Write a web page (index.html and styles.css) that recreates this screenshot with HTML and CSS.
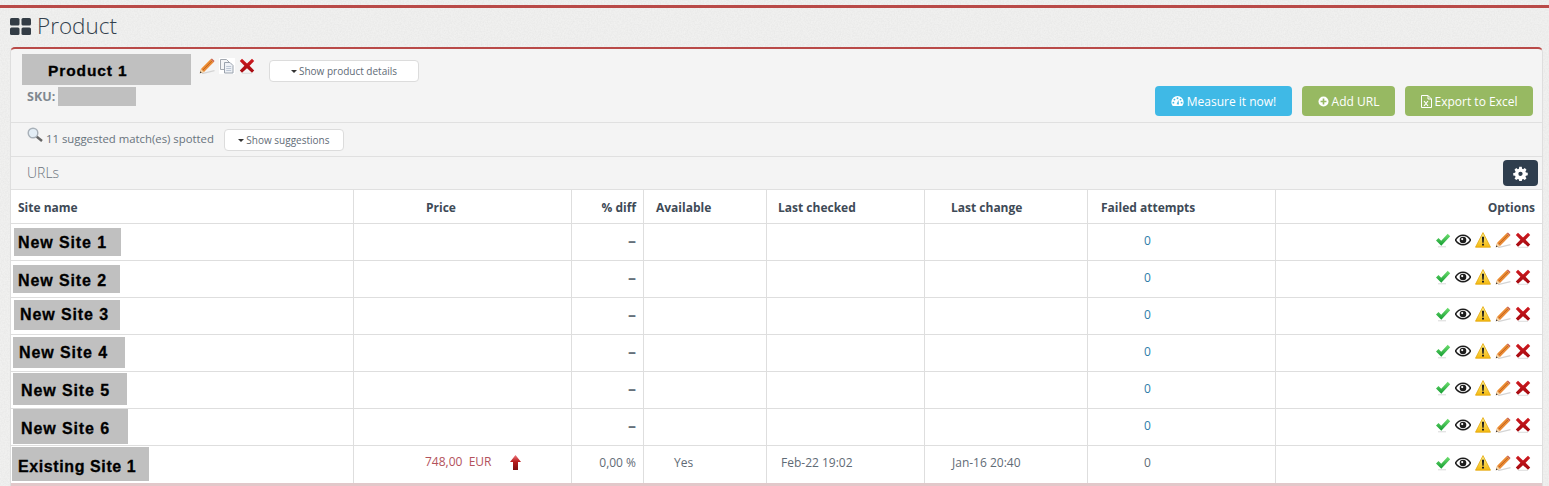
FILE: index.html
```html
<!DOCTYPE html>
<html lang="en">
<head>
<meta charset="utf-8">
<title>Product</title>
<link rel="stylesheet" href="styles.css">
</head>
<body>
<svg class="defs" width="0" height="0" aria-hidden="true">
  <defs>
    <linearGradient id="gy" x1="0" y1="0" x2="0" y2="1"><stop offset="0" stop-color="#fdf08a"/><stop offset="1" stop-color="#f4b90f"/></linearGradient>
    <linearGradient id="gg" x1="0" y1="0" x2="0" y2="1"><stop offset="0" stop-color="#6fe070"/><stop offset="1" stop-color="#129a30"/></linearGradient>
    <linearGradient id="gr" x1="0" y1="0" x2="0" y2="1"><stop offset="0" stop-color="#ee7a80"/><stop offset="0.45" stop-color="#b81a1a"/><stop offset="1" stop-color="#7c0f0f"/></linearGradient>
    <linearGradient id="gx" x1="0" y1="0" x2="0" y2="1"><stop offset="0" stop-color="#d01a20"/><stop offset="1" stop-color="#a30a10"/></linearGradient>
    <symbol id="i-check" viewBox="0 0 16 16"><path d="M3 14.800h8" stroke="#d9d9d9" stroke-width="1"/><path d="M1 8.400 3.500 5.900l2.700 2.800L12.700 1.800 15.200 4.200 6.300 13.800z" fill="url(#gg)"/></symbol>
    <symbol id="i-eye" viewBox="0 0 16 16"><path d="M.4 8C2.400 4.700 5 3.200 8 3.200S13.600 4.700 15.600 8C13.600 11.300 11 12.800 8 12.800S2.400 11.300.4 8Z" fill="#fff" stroke="#1d1d1d" stroke-width="1.500"/><circle cx="8" cy="8" r="3.300" fill="#1d1d1d"/><circle cx="7.200" cy="7.100" r="1.100" fill="#fff"/></symbol>
    <symbol id="i-warn" viewBox="0 0 16 16"><path d="M8 .6 15.500 15.200H.5Z" fill="url(#gy)" stroke="#e3a70d" stroke-width=".8" stroke-linejoin="round"/><path d="M6.900 4.800h2.200l-.4 6H7.300ZM7 11.700h2v1.900H7Z" fill="#1f1f1f"/></symbol>
    <symbol id="i-pencil" viewBox="0 0 16 16"><path d="M3 15.600 15.500 12.600" stroke="#d4d4d4" stroke-width="1.300" fill="none"/><path d="M.8 15.200 2 11 11.700 1.300 14.600 4.200 5 13.900Z" fill="#e98a35"/><path d="M3.400 12.600 12.900 3" stroke="#c4661c" stroke-width="1"/><path d="M2.600 10.400 11.400 1.600" stroke="#f7b56b" stroke-width=".8"/><path d="M11.700 1.300 12.900.4 15.500 3 14.600 4.200Z" fill="#c9604c"/><path d="M.8 15.200 2 11l3 2.900Z" fill="#f4d6aa"/><path d="M.8 15.200l.5-1.900 1.400 1.400Z" fill="#3a3a3a"/></symbol>
    <symbol id="i-x" viewBox="0 0 16 16"><path d="M3 15.300h10" stroke="#dcdcdc" stroke-width="1"/><path d="M.8 3 3 .8 8 5.400 13 .8 15.200 3 10.600 7.800l4.600 4.800L13 14.800 8 10.200 3 14.800.8 12.600 5.400 7.800Z" fill="url(#gx)"/></symbol>
  </defs>
</svg>

<header class="page-title">
  <svg class="title-icon" viewBox="0 0 21 17" aria-hidden="true">
    <rect x="0" y="0" width="9.500" height="7.500" rx="1.500"/><rect x="11.500" y="0" width="9.500" height="7.500" rx="1.500"/>
    <rect x="0" y="9.500" width="9.500" height="7.500" rx="1.500"/><rect x="11.500" y="9.500" width="9.500" height="7.500" rx="1.500"/>
  </svg>
  <h1>Product</h1>
</header>

<main class="panel">
  <section class="summary">
    <div class="summary-left">
      <div class="product-row">
        <div class="product-name">Product 1</div>
        <div class="product-icons">
          <svg class="ico"><use href="#i-pencil"/></svg>
          <svg class="ico" viewBox="0 0 16 16"><rect width="16" height="16" fill="#fff"/><path d="M1.500 1.500h6l2.500 2.500v7.500H1.500Z" fill="#f4f5f7" stroke="#a3a8b0"/><path d="M5.500 4.500h5.500l3 3v7.500H5.500Z" fill="#eef1f6" stroke="#9aa2ad"/><path d="M7.200 8.500h5M7.200 10.500h5M7.200 12.500h5" stroke="#bcc6d4"/></svg>
          <svg class="ico"><use href="#i-x"/></svg>
        </div>
        <button class="btn-light details-btn"><span class="caret"></span>Show product details</button>
      </div>
      <div class="sku"><span>SKU:</span><span class="sku-box"></span></div>
    </div>
    <div class="actions">
      <a class="btn btn-blue">
        <svg class="btn-ico" viewBox="0 0 14 12"><path d="M7 .5A6.600 6.600 0 0 0 .4 7c0 1.800.6 3.400 1.600 4.500h10c1-1.100 1.600-2.700 1.600-4.500A6.600 6.600 0 0 0 7 .5Z" fill="#fff"/><circle cx="7" cy="3" r="1" fill="#3fb9e6"/><circle cx="3.700" cy="4.500" r="1" fill="#3fb9e6"/><circle cx="10.300" cy="4.500" r="1" fill="#3fb9e6"/><circle cx="2.600" cy="7.800" r="1" fill="#3fb9e6"/><circle cx="11.400" cy="7.800" r="1" fill="#3fb9e6"/><path d="M6 9.500 8 5l.6 4.700Z" fill="#3fb9e6"/></svg>Measure it now!</a>
      <a class="btn btn-green">
        <svg class="btn-ico plus" viewBox="0 0 12 12"><circle cx="6" cy="6" r="5.500" fill="#fff"/><path d="M6 2.800v6.400M2.800 6h6.400" stroke="#97b962" stroke-width="1.800"/></svg>Add URL</a>
      <a class="btn btn-green">
        <svg class="btn-ico xls" viewBox="0 0 11 13"><path d="M.5.500h6.500l3.500 3.500v8.500H.5Z" fill="none" stroke="#fff"/><path d="M7 .5V4h3.500" fill="none" stroke="#fff"/><path d="M3 6l4 5M7 6l-4 5" stroke="#fff" stroke-width="1.200"/></svg>Export to Excel</a>
    </div>
  </section>

  <section class="suggest">
    <svg class="lens" viewBox="0 0 16 16"><path d="M9.500 9.500l5.500 4.500" stroke="#666" stroke-width="2.400"/><circle cx="6" cy="6" r="4.800" fill="#e3edf5" stroke="#a8b0b8" stroke-width="1.400"/></svg>
    <span class="suggest-text">11 suggested match(es) spotted</span>
    <button class="btn-light suggest-btn"><span class="caret"></span>Show suggestions</button>
  </section>

  <section class="urls-bar">
    <span class="urls-title">URLs</span>
    <button class="gear-btn" aria-label="Settings">
      <svg viewBox="-1 -1 18 18" width="15" height="15"><path fill="#fff" fill-rule="evenodd" d="M6.500 0h3l.4 2.200 1.300.6L13.100 1.500l2.100 2.100-1.300 1.900.6 1.300 2.200.4v3l-2.200.4-.6 1.300 1.300 1.900-2.100 2.100-1.900-1.300-1.300.6-.4 2.200h-3l-.4-2.200-1.300-.6-1.900 1.300L.8 14l1.300-1.900-.6-1.300L-.7 10.400v-3l2.200-.4.6-1.300L.8 3.600l2.100-2.100 1.900 1.300 1.300-.6ZM8 5.800a2.600 2.600 0 1 0 0 5.200 2.600 2.600 0 0 0 0-5.200Z"/></svg>
    </button>
  </section>

  <table class="urls">
    <colgroup>
      <col class="c1"><col class="c2"><col class="c3"><col class="c4"><col class="c5"><col class="c6"><col class="c7"><col class="c8">
    </colgroup>
    <thead>
      <tr>
        <th class="h-site">Site name</th><th class="h-price">Price</th><th class="h-right">% diff</th><th class="h-avail">Available</th><th class="h-checked">Last checked</th><th class="h-change">Last change</th><th class="h-fails">Failed attempts</th><th class="h-right">Options</th>
      </tr>
    </thead>
    <tbody>
      <tr>
        <td class="site"><div class="label l1">New Site 1</div></td><td></td><td class="diff">–</td><td></td><td></td><td></td><td class="fails">0</td>
        <td><div class="opts"><svg class="ico"><use href="#i-check"/></svg><svg class="ico"><use href="#i-eye"/></svg><svg class="ico"><use href="#i-warn"/></svg><svg class="ico"><use href="#i-pencil"/></svg><svg class="ico"><use href="#i-x"/></svg></div></td>
      </tr>
      <tr>
        <td class="site"><div class="label l2">New Site 2</div></td><td></td><td class="diff">–</td><td></td><td></td><td></td><td class="fails">0</td>
        <td><div class="opts"><svg class="ico"><use href="#i-check"/></svg><svg class="ico"><use href="#i-eye"/></svg><svg class="ico"><use href="#i-warn"/></svg><svg class="ico"><use href="#i-pencil"/></svg><svg class="ico"><use href="#i-x"/></svg></div></td>
      </tr>
      <tr>
        <td class="site"><div class="label l3">New Site 3</div></td><td></td><td class="diff">–</td><td></td><td></td><td></td><td class="fails">0</td>
        <td><div class="opts"><svg class="ico"><use href="#i-check"/></svg><svg class="ico"><use href="#i-eye"/></svg><svg class="ico"><use href="#i-warn"/></svg><svg class="ico"><use href="#i-pencil"/></svg><svg class="ico"><use href="#i-x"/></svg></div></td>
      </tr>
      <tr>
        <td class="site"><div class="label l4">New Site 4</div></td><td></td><td class="diff">–</td><td></td><td></td><td></td><td class="fails">0</td>
        <td><div class="opts"><svg class="ico"><use href="#i-check"/></svg><svg class="ico"><use href="#i-eye"/></svg><svg class="ico"><use href="#i-warn"/></svg><svg class="ico"><use href="#i-pencil"/></svg><svg class="ico"><use href="#i-x"/></svg></div></td>
      </tr>
      <tr>
        <td class="site"><div class="label l5">New Site 5</div></td><td></td><td class="diff">–</td><td></td><td></td><td></td><td class="fails">0</td>
        <td><div class="opts"><svg class="ico"><use href="#i-check"/></svg><svg class="ico"><use href="#i-eye"/></svg><svg class="ico"><use href="#i-warn"/></svg><svg class="ico"><use href="#i-pencil"/></svg><svg class="ico"><use href="#i-x"/></svg></div></td>
      </tr>
      <tr>
        <td class="site"><div class="label l6">New Site 6</div></td><td></td><td class="diff">–</td><td></td><td></td><td></td><td class="fails">0</td>
        <td><div class="opts"><svg class="ico"><use href="#i-check"/></svg><svg class="ico"><use href="#i-eye"/></svg><svg class="ico"><use href="#i-warn"/></svg><svg class="ico"><use href="#i-pencil"/></svg><svg class="ico"><use href="#i-x"/></svg></div></td>
      </tr>
      <tr class="last">
        <td class="site"><div class="label l7">Existing Site 1</div></td>
        <td class="price"><span class="amount">748,00&nbsp; EUR</span><svg class="arrow" viewBox="0 0 11 15"><path d="M5.500 0 11 7H8v8H3V7H0Z" fill="url(#gr)"/></svg></td>
        <td class="pct">0,00 %</td><td class="avail">Yes</td><td class="checked">Feb-22 19:02</td><td class="changed">Jan-16 20:40</td><td class="fails plain">0</td>
        <td><div class="opts"><svg class="ico"><use href="#i-check"/></svg><svg class="ico"><use href="#i-eye"/></svg><svg class="ico"><use href="#i-warn"/></svg><svg class="ico"><use href="#i-pencil"/></svg><svg class="ico"><use href="#i-x"/></svg></div></td>
      </tr>
    </tbody>
  </table>
</main>
</body>
</html>
```

FILE: styles.css
```css
* { box-sizing: border-box; }
html, body { margin: 0; height: 486px; overflow: hidden; }
body {
  background-color: #f1f1f0;
  background-image: url("data:image/svg+xml,%3Csvg xmlns='http://www.w3.org/2000/svg' width='300' height='300'%3E%3Cfilter id='n'%3E%3CfeTurbulence type='fractalNoise' baseFrequency='.7' numOctaves='2'/%3E%3CfeColorMatrix values='0 0 0 0 .5 0 0 0 0 .5 0 0 0 0 .5 0 0 0 .25 -.06'/%3E%3C/filter%3E%3Crect width='300' height='300' filter='url(%23n)'/%3E%3C/svg%3E");
  font-family: "Open Sans", "Liberation Sans", sans-serif;
  font-size: 12px;
  color: #5f6b76;
  padding: 5px 5px 0 10px;
}
body::before {
  content: "";
  display: block;
  height: 3px;
  margin: 0 -5px 0 -10px;
  background: #b94a48;
}
.defs { display: block; height: 0; }

.page-title { display: flex; align-items: center; gap: 6px; height: 39px; padding-bottom: 3px; }
.title-icon { width: 21px; height: 17px; fill: #333c45; }
.page-title h1 { margin: 0; font-size: 22.500px; font-weight: 300; color: #333f4d; line-height: 1; }

.panel { width: 1533px; border: 1px solid #dedede; border-top: 2px solid #b94a48; border-bottom: 0; border-radius: 5px 5px 0 0; background: #f4f4f4; }

.summary { height: 74px; display: flex; justify-content: space-between; border-bottom: 1px solid #e0e0e0; padding: 5px 9px 5px 11px; }
.summary-left { display: flex; flex-direction: column; }
.product-row { display: flex; align-items: flex-start; }
.product-name { width: 169px; height: 31px; background: #c0c0c0; color: #000; font: bold 15.500px/33px "Liberation Sans", sans-serif; letter-spacing: .9px; padding-left: 26px; -webkit-text-stroke: .3px #000; }
.product-icons { display: flex; gap: 4px; margin: 4px 0 0 8px; align-items: flex-start; }
.ico { width: 16px; height: 16px; display: block; }
.btn-light { background: #fff; border: 1px solid #dcdcdc; border-radius: 4px; font-family: "Open Sans", sans-serif; font-size: 10px; color: #5f6b76; padding: 0; height: 22px; display: flex; align-items: center; justify-content: center; }
.caret { width: 0; height: 0; border: 3px solid transparent; border-top-color: #333; border-bottom: 0; margin-right: 2px; }
.details-btn { width: 150px; margin: 6px 0 0 14px; }
.sku { display: flex; align-items: flex-start; margin: 2px 0 0 5px; font-weight: 700; font-size: 12.500px; color: #808890; line-height: 19px; }
.sku-box { width: 78px; height: 19px; background: #c0c0c0; margin-left: 3px; }

.actions { display: flex; gap: 10px; align-items: flex-start; padding-top: 32px; }
.btn { height: 30px; border-radius: 4px; color: #fff; font-size: 12px; display: flex; align-items: center; justify-content: center; gap: 3px; }
.btn:nth-child(1) { width: 137px; }
.btn:nth-child(2) { width: 93px; }
.btn:nth-child(3) { width: 128px; }
.btn-blue { background: #3fb9e6; }
.btn-green { background: #97b962; }
.btn-ico { width: 13px; height: 12px; }
.plus { width: 11px; height: 11px; }
.xls { width: 11px; height: 13px; }

.suggest { height: 34px; display: flex; align-items: flex-start; border-bottom: 1px solid #e0e0e0; padding: 4px 0 0 16px; }
.lens { width: 16px; height: 16px; }
.suggest-text { margin: 4px 0 0 3px; font-size: 11.350px; color: #68737d; }
.suggest-btn { width: 120px; margin: 2px 0 0 10px; }

.urls-bar { height: 33px; display: flex; align-items: flex-start; justify-content: space-between; padding: 3px 4px 0 16px; border-bottom: 1px solid #e0e0e0; }
.urls-title { font-size: 14px; font-weight: 300; color: #6d757d; line-height: 26px; }
.gear-btn { width: 35px; height: 26px; border: 0; border-radius: 4px; background: #2f3e4e; display: flex; align-items: center; justify-content: center; padding: 0; }

.urls { width: 1531px; table-layout: fixed; border-collapse: separate; border-spacing: 0; background: #fff; border-bottom: 3px solid #e2c8ca; }
.c1 { width: 343px; } .c2 { width: 218px; } .c3 { width: 72px; } .c4 { width: 123px; }
.c5 { width: 158px; } .c6 { width: 163px; } .c7 { width: 188px; } .c8 { width: 266px; }
.urls th, .urls td { padding: 0; border-right: 1px solid #dedede; border-bottom: 1px solid #dedede; vertical-align: middle; }
.urls th:last-child, .urls td:last-child { border-right: 0; }
.urls th { height: 34px; padding-top: 1px; font-size: 12px; font-weight: 700; color: #3e4a56; text-align: left; }
.urls td { height: 37px; font-size: 12px; padding-bottom: 4px; }
.urls .last td { height: 37px; border-bottom: 0; }
.urls th.h-site { padding-left: 7px; }
.urls th.h-price { padding-left: 72px; }
.urls th.h-right { text-align: right; padding-right: 7px; }
.urls th.h-avail { padding-left: 12px; }
.urls th.h-checked { padding-left: 11px; }
.urls th.h-change { padding-left: 26px; }
.urls th.h-fails { padding-left: 13px; }

.urls td.site { vertical-align: top; padding: 0; }
.label { background: #c0c0c0; color: #000; font: bold 16px/1 "Liberation Sans", sans-serif; letter-spacing: .9px; -webkit-text-stroke: .3px #000; display: flex; align-items: center; white-space: nowrap; }
.l1 { width: 107px; height: 28px; margin: 4px 0 0 3px; padding: 1px 0 0 4px; }
.l2 { width: 107px; height: 28px; margin: 4px 0 0 2px; padding: 4px 0 0 5px; }
.l3 { width: 106px; height: 30px; margin: 2px 0 0 3px; padding: 0 0 0 6px; }
.l4 { width: 112px; height: 31px; margin: 2px 0 0 2px; padding: 1px 0 0 6px; }
.l5 { width: 114px; height: 32px; margin: 1px 0 0 2px; padding: 4px 0 0 8px; }
.l6 { width: 115px; height: 35px; margin: 0 0 0 2px; padding: 5px 0 0 8px; }
.l7 { width: 137px; height: 34px; margin: 1px 0 0 1px; padding: 6px 0 0 6px; letter-spacing: .6px; }

.urls td.diff { text-align: right; padding-right: 7px; font-weight: 700; font-size: 16px; line-height: 1; color: #66717b; }
.urls td.fails { color: #2e7ba8; padding-left: 56px; }
.urls td.fails.plain { color: #5f6b76; }
.opts { display: flex; gap: 4px; justify-content: flex-end; padding-right: 11px; }

.urls td.price { padding-left: 71px; }
.amount { color: #b3525c; }
.arrow { width: 11px; height: 15px; margin: 0 0 2px 19px; vertical-align: middle; }
.urls td.pct { text-align: right; padding-right: 7px; }
.urls td.avail { padding-left: 30px; }
.urls td.checked { padding-left: 14px; }
.urls td.changed { padding-left: 27px; }
```
